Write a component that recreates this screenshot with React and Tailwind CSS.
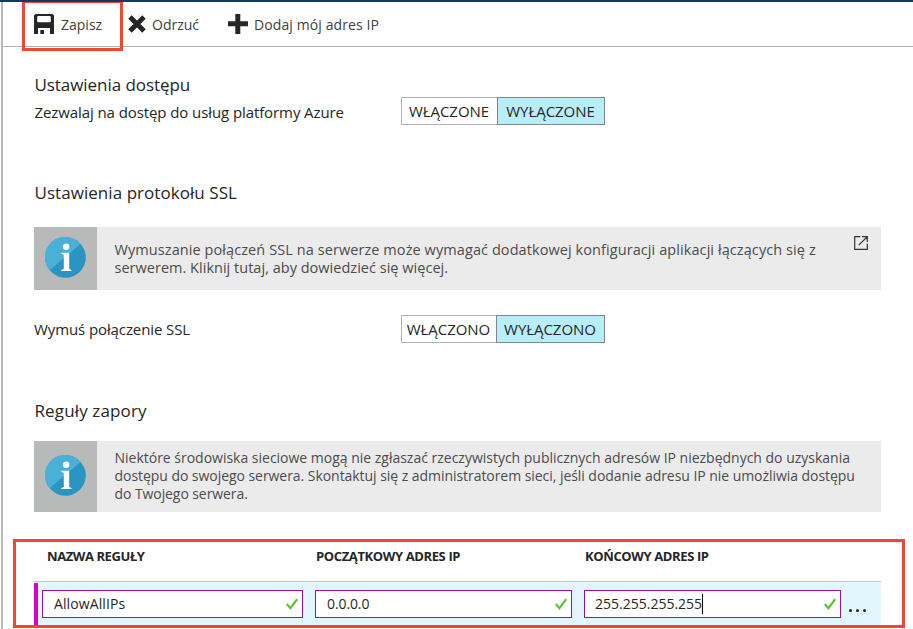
function SaveIcon() {
  return (
    <svg className="h-5 w-5 shrink-0" viewBox="0 0 20 20">
      <path fillRule="evenodd" fill="#262626" d="M1.5 0H18.5L20 1.5V20H16V14H4V20H0V1.5ZM4 2L3.2 2.8V7.4L4 8.2H16L16.8 7.4V2.8L16 2Z" />
      <path fill="#262626" d="M6.3 16H10V20H6.3Z" />
    </svg>
  );
}

function DiscardIcon() {
  return (
    <svg className="h-[18px] w-[18px] shrink-0" viewBox="0 0 18 18">
      <path d="M2 2L16 16M16 2L2 16" stroke="#262626" strokeWidth="4.8" />
    </svg>
  );
}

function PlusIcon() {
  return (
    <svg className="h-5 w-5 shrink-0" viewBox="0 0 20 20">
      <path fill="#262626" d="M7.3 0H12.3V7.3H20V12.3H12.3V20H7.3V12.3H0V7.3H7.3Z" />
    </svg>
  );
}

function InfoIcon() {
  return (
    <svg className="h-[41px] w-[41px]" viewBox="0 0 41 41">
      <circle cx="20.5" cy="20.5" r="20.3" fill="#2a94c2" />
      <path d="M4.6 33.2A20.3 20.3 0 0 1 35.6 6.9Z" fill="#4ab0d5" />
      <circle cx="21.2" cy="9.8" r="3.2" fill="#fff" />
      <path d="M16.4 15.7H24.2V32L26.4 32.9V34H16.2V32.9L18.8 32V17.8L16.4 16.9Z" fill="#fff" />
    </svg>
  );
}

function ExternalIcon() {
  return (
    <svg className="h-[14px] w-[14px]" viewBox="0 0 14 14" fill="none" stroke="#333" strokeWidth="1.2">
      <path d="M6.3 .7H.7V13.3H13.3V7.8M8 .7H13.3V6M13 1L4.8 9.2" />
    </svg>
  );
}

function Check() {
  return (
    <svg className="h-3 w-3 shrink-0" viewBox="0 0 12 12" fill="none" stroke="#62c13a" strokeWidth="2.2">
      <path d="M.8 6L4.4 10.2L11.2 1.2" />
    </svg>
  );
}

function Toggle({ on, off, firstWidth, secondWidth }) {
  return (
    <div className="flex h-7 w-[204px] text-[15px] leading-[27px] tracking-[-0.05px] text-[#262626]">
      <div className={`${firstWidth} border border-r-0 border-[#b3b3b3] pr-px text-center whitespace-nowrap`}>{on}</div>
      <div className={`${secondWidth} border border-[#858585] bg-[#b8eefa] pr-px text-center whitespace-nowrap`}>{off}</div>
    </div>
  );
}

function Field({ value, width, textClass, caret }) {
  return (
    <div className={`${width} mt-2 flex h-7 shrink-0 items-center border border-[#9b0f9f] bg-white pr-1`}>
      <span className={`${textClass} text-[14px] leading-[26px] text-[#262626]`}>{value}</span>
      {caret && <span className="h-5 w-px bg-black" />}
      <span className="ml-auto"><Check /></span>
    </div>
  );
}

export default function App() {
  return (
    <div className="relative h-[629px] w-[913px] overflow-hidden border-t-2 border-[#0f386b] bg-white font-['Open_Sans','Noto_Sans',sans-serif] text-[#262626]">
      <div className="ml-px h-[627px] border-l-2 border-[#b9b9b9]">
        <header className="flex h-[45px] items-center border-b border-[#b5b5b5] pl-[31px] text-[14px] whitespace-nowrap text-[#404040]">
          <SaveIcon />
          <span className="ml-[7px] w-[67px]">Zapisz</span>
          <DiscardIcon />
          <span className="ml-[6px] w-[76px]">Odrzuć</span>
          <PlusIcon />
          <span className="ml-[6px] tracking-[0.1px]">Dodaj mój adres IP</span>
        </header>

        <main className="w-[878px] pl-[31px] whitespace-nowrap">
          <h2 className="mt-[26px] h-6 pl-[0.5px] text-[17px] leading-6 tracking-[-0.06px]">Ustawienia dostępu</h2>
          <div className="flex h-7">
            <span className="w-[367px] pt-[3px] pl-[0.5px] text-[15px] leading-[25px] tracking-[-0.09px]">Zezwalaj na dostęp do usług platformy Azure</span>
            <Toggle on="WŁĄCZONE" off="WYŁĄCZONE" firstWidth="w-[96px]" secondWidth="w-[108px]" />
          </div>

          <h2 className="mt-14 h-6 pl-[0.5px] text-[17px] leading-6 tracking-[0.05px]">Ustawienia protokołu SSL</h2>
          <div className="mt-[22px] flex h-[63px] w-[847px] bg-[#ebebeb]">
            <div className="flex w-[63px] items-center justify-center bg-[#b8baba] pb-[3px]"><InfoIcon /></div>
            <div className="w-[757px] pt-[14px] pl-[17.5px] text-[14.5px] leading-[18px] text-[#4c4c4c]">
              <div className="tracking-[0.08px]">Wymuszanie połączeń SSL na serwerze może wymagać dodatkowej konfiguracji aplikacji łączących się z</div>
              <div className="tracking-[0.02px]">serwerem. Kliknij tutaj, aby dowiedzieć się więcej.</div>
            </div>
            <div className="pt-[9px]"><ExternalIcon /></div>
          </div>

          <div className="mt-[25px] flex h-7">
            <span className="w-[367px] pt-[2px] text-[15px] leading-[25px] tracking-[-0.1px]">Wymuś połączenie SSL</span>
            <Toggle on="WŁĄCZONO" off="WYŁĄCZONO" firstWidth="w-[95px]" secondWidth="w-[109px]" />
          </div>

          <h2 className="mt-14 h-6 pl-[0.5px] text-[17px] leading-6 tracking-[0.13px]">Reguły zapory</h2>
          <div className="mt-[18px] flex h-[71px] w-[847px] bg-[#ebebeb]">
            <div className="flex w-[63px] items-center justify-center bg-[#b8baba] pb-[3px]"><InfoIcon /></div>
            <div className="pt-2 pl-[17.5px] text-[14px] leading-[18px] text-[#4c4c4c]">
              <div className="tracking-[-0.01px]">Niektóre środowiska sieciowe mogą nie zgłaszać rzeczywistych publicznych adresów IP niezbędnych do uzyskania</div>
              <div className="tracking-[-0.05px]">dostępu do swojego serwera. Skontaktuj się z administratorem sieci, jeśli dodanie adresu IP nie umożliwia dostępu</div>
              <div className="tracking-[-0.08px]">do Twojego serwera.</div>
            </div>
          </div>

          <div className="mt-[30px] flex h-[40px] w-[847px] border-b border-[#c4c8ca] pt-1 pl-[13px] text-[13px] leading-5 font-bold">
            <span className="w-[269px] tracking-[-0.42px]">NAZWA REGUŁY</span>
            <span className="w-[269px] tracking-[-0.38px]">POCZĄTKOWY ADRES IP</span>
            <span className="tracking-[-0.38px]">KOŃCOWY ADRES IP</span>
          </div>
          <div className="flex h-[45px] w-[847px] bg-[#e1f6fd]">
            <div className="mt-px mr-1 w-1 bg-[#d800cc]" />
            <Field value="AllowAllIPs" width="w-[261px]" textClass="pl-[11px] tracking-[0.1px]" />
            <div className="w-3" />
            <Field value="0.0.0.0" width="w-[257px]" textClass="pl-[11px] tracking-[-0.1px]" />
            <div className="w-3" />
            <Field value="255.255.255.255" width="w-[257px]" textClass="pl-[10px] tracking-[0px]" caret />
            <div className="flex gap-[4px] pt-[27px] pl-2">
              <i className="h-[3px] w-[3px] rounded-full bg-[#262626]" />
              <i className="h-[3px] w-[3px] rounded-full bg-[#262626]" />
              <i className="h-[3px] w-[3px] rounded-full bg-[#262626]" />
            </div>
          </div>
        </main>
      </div>
      <div className="absolute -top-[2px] left-[22px] h-[51px] w-[101px] border-3 border-[#f04632]" />
      <div className="absolute top-[537px] left-[13px] h-[89px] w-[892px] border-3 border-[#f04632]" />
    </div>
  );
}
